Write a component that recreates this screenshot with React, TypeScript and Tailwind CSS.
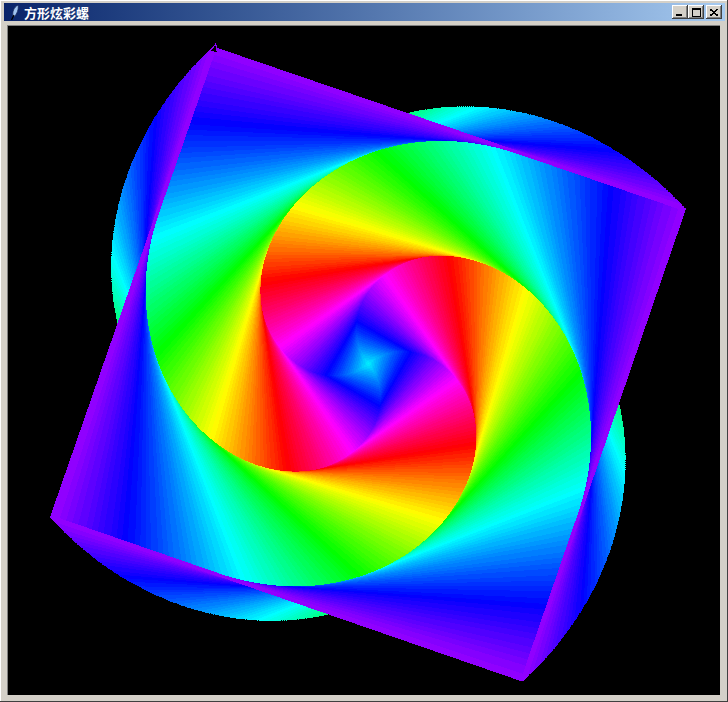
import { useMemo } from "react";

// square spiral, replayed like the turtle script that drew it
const STEPS = 1950;
const GROW = 0.2555;
const TURN = 90.1;
const LAST_HEADING = 70.8;
const END = { x: 207.5, y: 20.5 }; // where the last side stops, in canvas coords
const HUE_BANDS = 150;

const hsv = (h: number) => {
  const hue = ((h % 360) + 360) % 360;
  const f = (n: number) => {
    const k = (n + hue / 60) % 6;
    return Math.round(255 * (1 - Math.max(0, Math.min(k, 4 - k, 1))));
  };
  return `rgb(${f(5)},${f(3)},${f(1)})`;
};

type Seg = { x1: number; y1: number; x2: number; y2: number; color: string };

const buildSpiral = () => {
  const segs: Seg[] = [];
  let heading = LAST_HEADING + TURN * (STEPS - 1);
  let x = 0;
  let y = 0;
  for (let k = 1; k <= STEPS; k++) {
    const rad = (heading * Math.PI) / 180;
    const nx = x + GROW * k * Math.cos(rad);
    const ny = y - GROW * k * Math.sin(rad);
    const band = Math.ceil((k / STEPS) * HUE_BANDS) / HUE_BANDS;
    segs.push({ x1: x, y1: y, x2: nx, y2: ny, color: hsv(180 + band * 454) });
    x = nx;
    y = ny;
    heading -= TURN;
  }
  const dx = END.x - x;
  const dy = END.y - y;
  return segs.map((s) => ({ ...s, x1: s.x1 + dx, y1: s.y1 + dy, x2: s.x2 + dx, y2: s.y2 + dy }));
};

const Spiral = () => {
  const segs = useMemo(buildSpiral, []);
  return (
    <svg width="712" height="666" viewBox="0 0 712 666" shapeRendering="crispEdges" className="block">
      {segs.map((s, i) => (
        <line key={i} x1={s.x1} y1={s.y1} x2={s.x2} y2={s.y2} stroke={s.color} strokeWidth={3} strokeLinecap="round" />
      ))}
      <polygon points="207.5,18 202.5,25 209.5,27" fill="#000" stroke="#9000ff" strokeWidth={1} />
    </svg>
  );
};

const CaptionButton = ({ children }: { children: React.ReactNode }) => (
  <div className="flex h-[14px] w-[16px] items-center justify-center bg-[#d4d0c8] shadow-[inset_-1px_-1px_0_#404040,inset_1px_1px_0_#ffffff,inset_-2px_-2px_0_#808080]">
    {children}
  </div>
);

export default function App() {
  return (
    <div className="flex h-[702px] w-[728px] flex-col overflow-hidden bg-[#d4d0c8] pt-[3px] pr-[3px] pb-[2px] pl-[4px] shadow-[inset_-1px_-1px_0_#404040,inset_1px_1px_0_#ffffff]">
      <div className="flex h-[18px] shrink-0 items-center justify-between bg-gradient-to-r from-[#0a246a] to-[#a6caf0] pr-[3px] pl-[2px]">
        <div className="flex items-center gap-[2px]">
          <svg width="16" height="16" viewBox="0 0 16 16" className="block">
            <path d="M7 12 C6 8 8 3 12 1 C13 5 11 10 8 13 Z" fill="#a0c4f0" stroke="#1a2a5a" strokeWidth="0.8" />
            <path d="M5.5 16 L8 11" stroke="#000" strokeWidth="1.2" />
          </svg>
          <span className="font-['Noto_Sans_CJK_SC',sans-serif] text-[13px] leading-none font-bold text-white">方形炫彩螺</span>
        </div>
        <div className="flex items-center">
          <CaptionButton>
            <div className="mt-[6px] mr-[2px] h-[2px] w-[6px] bg-black" />
          </CaptionButton>
          <CaptionButton>
            <div className="h-[9px] w-[9px] border border-t-2 border-black" />
          </CaptionButton>
          <div className="ml-[2px]">
            <CaptionButton>
              <svg width="8" height="7" viewBox="0 0 8 7" className="block" shapeRendering="crispEdges">
                <path d="M0 0 L8 7 M8 0 L0 7" stroke="#000" strokeWidth="1.6" />
              </svg>
            </CaptionButton>
          </div>
        </div>
      </div>
      <div className="mt-[4px] mr-[5px] mb-[5px] ml-[3px] flex-1 overflow-hidden border-t border-l border-[#808080] bg-black">
        <Spiral />
      </div>
    </div>
  );
}
